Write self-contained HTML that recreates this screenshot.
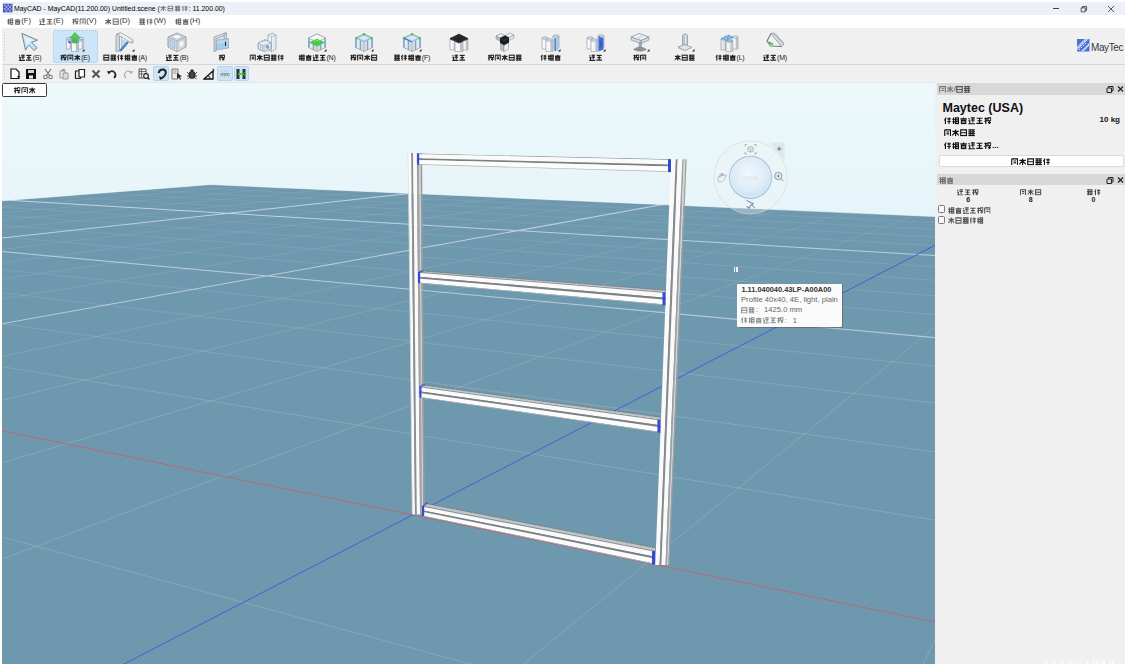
<!DOCTYPE html>
<html><head><meta charset="utf-8"><style>
*{box-sizing:border-box}
body{margin:0;width:1134px;height:664px;overflow:hidden;position:relative;background:#ffffff;font-family:"Liberation Sans",sans-serif;color:#000}
.a{position:absolute}
.cj{display:inline-block;vertical-align:middle}
.t{position:absolute;white-space:nowrap;line-height:1}
.t span{vertical-align:middle}
</style></head><body>
<svg width="0" height="0" style="position:absolute"><defs><symbol id="g0" viewBox="0 0 10 10"><path d="M1 1h8v8h-8zM1 5h8" fill="none" stroke="currentColor"/></symbol><symbol id="g1" viewBox="0 0 10 10"><path d="M2.2 0.5v9M0.5 3h3.5M0.5 6.5h3.5M5 1h4v8h-4zM5 3.7h4M5 6.3h4" fill="none" stroke="currentColor"/></symbol><symbol id="g2" viewBox="0 0 10 10"><path d="M1 1.5h8M2 5h6M0.5 8.7h9M5 1.5v7" fill="none" stroke="currentColor"/></symbol><symbol id="g3" viewBox="0 0 10 10"><path d="M0.5 3h9M5 0.5v9M5 3.5l-4.5 5M5 3.5l4.5 5" fill="none" stroke="currentColor"/></symbol><symbol id="g4" viewBox="0 0 10 10"><path d="M3 0.5l-2.5 4M2 3v6.5M4.5 2.5h5M4.5 6h5M7 0.5v9" fill="none" stroke="currentColor"/></symbol><symbol id="g5" viewBox="0 0 10 10"><path d="M0.8 1.5l1.5 1.5M0.5 5h2v3l-1 1.3h9M4 1h5.5M4 4h5.5M6.7 1v6.5" fill="none" stroke="currentColor"/></symbol><symbol id="g6" viewBox="0 0 10 10"><path d="M1 1v8.5M1 1h8v8.5M3.2 0.2l1.3 1.3M3.5 4h3.5M3.5 6.5h3.5" fill="none" stroke="currentColor"/></symbol><symbol id="g7" viewBox="0 0 10 10"><path d="M0.5 1h9M0.5 3.7h9M0.5 6.3h9M0.5 9h9M3 1v8M7 1v8" fill="none" stroke="currentColor"/></symbol><symbol id="g8" viewBox="0 0 10 10"><path d="M5 0.5v2M0.5 2.5h9M2 4.5h6v4.5h-6zM2 6.7h6" fill="none" stroke="currentColor"/></symbol><symbol id="g9" viewBox="0 0 10 10"><path d="M0.5 2h4M2.5 0.5v9M0.5 6l4-1.5M5.5 1h4v4h-4zM5.5 7.5h4M7.5 5v4.5" fill="none" stroke="currentColor"/></symbol></defs></svg>
<div class="a" style="left:2px;top:1.5px;width:1123px;height:13px;background:#eef0f7"></div><svg class="a" style="left:3px;top:3px" width="9.5" height="10" viewBox="0 0 11 10"><rect width="11" height="10" fill="#3a52c8"/><path d="M1 1h2v2h-2zM5 1h2v2h-2zM3 3h2v2h-2zM7 3h2v2h-2zM1 5h2v2h-2zM5 5h2v2h-2zM3 7h2v2h-2zM7 7h2v2h-2zM9 1h1v2h-1zM9 5h1v2h-1z" fill="#a8b4e8"/></svg><div class="t" style="left:14px;top:9.0px;transform:translate(0,-50%);font-size:6.9px;color:#000">MayCAD - MayCAD(11.200.00) Untitled.scene (<svg class="cj" width="28.00" height="6" viewBox="0 0 28.00 6" style="margin-right:0.80px;color:#000;opacity:0.55;overflow:visible;stroke-width:1.6"><use href="#g3" x="0.00" y="0" width="6.40" height="6"/><use href="#g0" x="7.20" y="0" width="6.40" height="6"/><use href="#g7" x="14.40" y="0" width="6.40" height="6"/><use href="#g4" x="21.60" y="0" width="6.40" height="6"/></svg>: 11.200.00)</div><div class="a" style="left:1053px;top:8px;width:6px;height:0.8px;background:#444"></div><svg class="a" style="left:1080px;top:4.5px" width="8" height="8" viewBox="0 0 8 8"><path d="M1.2 2.8h4v4h-4zM2.6 2.8v-1.4h4v4h-1.4" fill="none" stroke="#444" stroke-width="0.9"/></svg><svg class="a" style="left:1107px;top:4.5px" width="8" height="8" viewBox="0 0 8 8"><path d="M1 1L7 7M7 1L1 7" stroke="#444" stroke-width="0.9"/></svg>
<div class="a" style="left:2px;top:14.5px;width:1123px;height:13.5px;background:#ffffff"></div><div class="t" style="left:6.5px;top:21.2px;transform:translate(0,-50%);font-size:7.6px;color:#333"><svg class="cj" width="13.90" height="7.2" viewBox="0 0 13.90 7.2" style="margin-right:0.90px;color:#000;opacity:0.6;overflow:visible;stroke-width:1.6"><use href="#g1" x="0.00" y="0" width="6.50" height="7.2"/><use href="#g8" x="7.40" y="0" width="6.50" height="7.2"/></svg><span>(F)</span></div><div class="t" style="left:38.5px;top:21.2px;transform:translate(0,-50%);font-size:7.6px;color:#333"><svg class="cj" width="13.90" height="7.2" viewBox="0 0 13.90 7.2" style="margin-right:0.90px;color:#000;opacity:0.6;overflow:visible;stroke-width:1.6"><use href="#g5" x="0.00" y="0" width="6.50" height="7.2"/><use href="#g2" x="7.40" y="0" width="6.50" height="7.2"/></svg><span>(E)</span></div><div class="t" style="left:71.5px;top:21.2px;transform:translate(0,-50%);font-size:7.6px;color:#333"><svg class="cj" width="13.90" height="7.2" viewBox="0 0 13.90 7.2" style="margin-right:0.90px;color:#000;opacity:0.6;overflow:visible;stroke-width:1.6"><use href="#g9" x="0.00" y="0" width="6.50" height="7.2"/><use href="#g6" x="7.40" y="0" width="6.50" height="7.2"/></svg><span>(V)</span></div><div class="t" style="left:104.8px;top:21.2px;transform:translate(0,-50%);font-size:7.6px;color:#333"><svg class="cj" width="13.90" height="7.2" viewBox="0 0 13.90 7.2" style="margin-right:0.90px;color:#000;opacity:0.6;overflow:visible;stroke-width:1.6"><use href="#g3" x="0.00" y="0" width="6.50" height="7.2"/><use href="#g0" x="7.40" y="0" width="6.50" height="7.2"/></svg><span>(D)</span></div><div class="t" style="left:139px;top:21.2px;transform:translate(0,-50%);font-size:7.6px;color:#333"><svg class="cj" width="13.90" height="7.2" viewBox="0 0 13.90 7.2" style="margin-right:0.90px;color:#000;opacity:0.6;overflow:visible;stroke-width:1.6"><use href="#g7" x="0.00" y="0" width="6.50" height="7.2"/><use href="#g4" x="7.40" y="0" width="6.50" height="7.2"/></svg><span>(W)</span></div><div class="t" style="left:175px;top:21.2px;transform:translate(0,-50%);font-size:7.6px;color:#333"><svg class="cj" width="13.90" height="7.2" viewBox="0 0 13.90 7.2" style="margin-right:0.90px;color:#000;opacity:0.6;overflow:visible;stroke-width:1.6"><use href="#g1" x="0.00" y="0" width="6.50" height="7.2"/><use href="#g8" x="7.40" y="0" width="6.50" height="7.2"/></svg><span>(H)</span></div>
<div class="a" style="left:2px;top:28px;width:1123px;height:36px;background:#f0f0f0"></div><div class="a" style="left:2px;top:64px;width:1123px;height:1px;background:#d6d6d6"></div><div class="a" style="left:4px;top:32px;width:1px;height:29px;background:repeating-linear-gradient(180deg,#c4c4c4 0 1px,transparent 1px 3px)"></div><div class="a" style="left:53px;top:30px;width:45px;height:33px;background:#cde5f8;border:1px dotted #a9cbe8;border-radius:2px"></div><svg class="a" style="left:20px;top:32px;overflow:visible" width="20" height="20" viewBox="0 0 20 20"><path d="M1.8 1.3L17.6 8.2L11.6 10.3L17.2 15.8L14 18.6L8.6 12.9L5.5 18.2Z" fill="#c4def2" stroke="#6e7f8c" stroke-width="0.9" stroke-linejoin="round"/><path d="M3.5 3.5L14.5 8.3L10 9.8L7.5 14.5Z" fill="#e2f0fa"/></svg><div class="t" style="left:30px;top:57.4px;transform:translate(-50%,-50%);font-size:7px;color:#222;letter-spacing:-0.2px"><svg class="cj" width="13.40" height="7" viewBox="0 0 13.40 7" style="margin-right:0.60px;color:#111;opacity:0.9;overflow:visible;stroke-width:1.9"><use href="#g5" x="0.00" y="0" width="6.40" height="7"/><use href="#g2" x="7.00" y="0" width="6.40" height="7"/></svg><span>(S)</span></div><svg class="a" style="left:65px;top:32px;overflow:visible" width="20" height="20" viewBox="0 0 20 20"><path d="M1.5 6.5h5v10.5h-5z" fill="#f6f7f8" stroke="#7d8791" stroke-width="0.5"/><path d="M4.6 6.5h1.9v10.5h-1.9z" fill="#b9c1c8"/><ellipse cx="4.0" cy="6.5" rx="2.5" ry="1.2" fill="#cfe0ee" stroke="#7d8791" stroke-width="0.5"/><path d="M13.5 6.5h5v10.5h-5z" fill="#f6f7f8" stroke="#7d8791" stroke-width="0.5"/><path d="M16.6 6.5h1.9v10.5h-1.9z" fill="#b9c1c8"/><ellipse cx="16.0" cy="6.5" rx="2.5" ry="1.2" fill="#cfe0ee" stroke="#7d8791" stroke-width="0.5"/><path d="M6.5 9h7v10.5h-7z" fill="#f6f7f8" stroke="#7d8791" stroke-width="0.5"/><path d="M10.84 9h2.66v10.5h-2.66z" fill="#b9c1c8"/><ellipse cx="10.0" cy="9" rx="3.5" ry="1.2" fill="#8fb4d8" stroke="#7d8791" stroke-width="0.5"/><path d="M2 8.5L7 6L13 6L18 8.5L13 11L7 11Z" fill="#8fb0d4" opacity="0.75"/><path d="M3 9.5l3 1.5" stroke="#3d6fd0" stroke-width="1.6"/><path d="M10 0.5L15.2 6H12.3V11H7.7V6H4.8Z" fill="#52cc52" stroke="#2f9a3a" stroke-width="0.5"/><path d="M9.2 6.5v4M10.8 6.5v4" stroke="#2f9a3a" stroke-width="0.5"/><path d="M17 19.5l2.5-2.5v2.5z" fill="#1a1a1a"/></svg><div class="t" style="left:75px;top:57.4px;transform:translate(-50%,-50%);font-size:7px;color:#222;letter-spacing:-0.2px"><svg class="cj" width="20.40" height="7" viewBox="0 0 20.40 7" style="margin-right:0.60px;color:#111;opacity:0.9;overflow:visible;stroke-width:1.9"><use href="#g9" x="0.00" y="0" width="6.40" height="7"/><use href="#g6" x="7.00" y="0" width="6.40" height="7"/><use href="#g3" x="14.00" y="0" width="6.40" height="7"/></svg><span>(E)</span></div><svg class="a" style="left:115px;top:32px;overflow:visible" width="20" height="20" viewBox="0 0 20 20"><path d="M1 2.5L4.5 1L4.5 19L1 19.5Z" fill="#d0d6dc" stroke="#7d8791" stroke-width="0.6"/><path d="M4.5 1L6.5 1.5V18.5L4.5 19Z" fill="#eef1f3" stroke="#7d8791" stroke-width="0.5"/><path d="M2 2L6 0.8L18 8L17.5 11L14 9.5L5 4Z" fill="#f0f2f4" stroke="#7d8791" stroke-width="0.6"/><path d="M14 9.5L17.5 11L17.8 8" fill="#dde2e6" stroke="#7d8791" stroke-width="0.5"/><path d="M6.5 7L13.5 10.5L7 19Z" fill="#bcd6ec"/><path d="M5 19L13 10" stroke="#4b78d0" stroke-width="2.2"/><path d="M17 19.5l2.5-2.5v2.5z" fill="#1a1a1a"/></svg><div class="t" style="left:125px;top:57.4px;transform:translate(-50%,-50%);font-size:7px;color:#222;letter-spacing:-0.2px"><svg class="cj" width="34.40" height="7" viewBox="0 0 34.40 7" style="margin-right:0.60px;color:#111;opacity:0.9;overflow:visible;stroke-width:1.9"><use href="#g0" x="0.00" y="0" width="6.40" height="7"/><use href="#g7" x="7.00" y="0" width="6.40" height="7"/><use href="#g4" x="14.00" y="0" width="6.40" height="7"/><use href="#g1" x="21.00" y="0" width="6.40" height="7"/><use href="#g8" x="28.00" y="0" width="6.40" height="7"/></svg><span>(A)</span></div><svg class="a" style="left:167px;top:32px;overflow:visible" width="20" height="20" viewBox="0 0 20 20"><path d="M1 5L10 1L19 5V15L10 19.5L1 15Z" fill="#dfe5ea" stroke="#7d8791" stroke-width="0.7"/><path d="M1 5L10 9L19 5M10 9V19.5" fill="none" stroke="#7d8791" stroke-width="0.6"/><path d="M3 7.5L8 9.8V16.5L3 14Z" fill="#c0d2e2" stroke="#8aa2b8" stroke-width="0.5"/><path d="M12 9.8L17 7.5V14L12 16.5Z" fill="#f4f6f8" stroke="#8aa2b8" stroke-width="0.5"/><path d="M4 4.8L10 2.3L16 4.8L10 7.3Z" fill="#f5f7f9" stroke="#8aa2b8" stroke-width="0.5"/><path d="M1.5 5.5v9.5M18.5 5.5v9.5" stroke="#a9b4bd" stroke-width="1.2"/></svg><div class="t" style="left:177px;top:57.4px;transform:translate(-50%,-50%);font-size:7px;color:#222;letter-spacing:-0.2px"><svg class="cj" width="13.40" height="7" viewBox="0 0 13.40 7" style="margin-right:0.60px;color:#111;opacity:0.9;overflow:visible;stroke-width:1.9"><use href="#g5" x="0.00" y="0" width="6.40" height="7"/><use href="#g2" x="7.00" y="0" width="6.40" height="7"/></svg><span>(B)</span></div><svg class="a" style="left:212px;top:32px;overflow:visible" width="20" height="20" viewBox="0 0 20 20"><path d="M2 5L14 0.5V3L4 7V19L2 19.5Z" fill="#d3d9de" stroke="#7d8791" stroke-width="0.6"/><path d="M12 2L14.5 1V13L12 14Z" fill="#c8d0d6" stroke="#7d8791" stroke-width="0.5"/><path d="M4.5 8L16.5 6.5V16L4.5 18Z" fill="#a6cdeb" stroke="#7f9fc0" stroke-width="0.6"/><path d="M5 9L16 8V10L5 12Z" fill="#c6e0f4" opacity="0.8"/><path d="M13.5 9.5v4.5" stroke="#222" stroke-width="1"/></svg><div class="t" style="left:222px;top:57.4px;transform:translate(-50%,-50%);font-size:7px;color:#222;letter-spacing:-0.2px"><svg class="cj" width="6.40" height="7" viewBox="0 0 6.40 7" style="margin-right:0.60px;color:#111;opacity:0.9;overflow:visible;stroke-width:1.9"><use href="#g9" x="0.00" y="0" width="6.40" height="7"/></svg></div><svg class="a" style="left:257px;top:32px;overflow:visible" width="20" height="20" viewBox="0 0 20 20"><path d="M11 3L15.5 1L19 3V17L14.5 19.5L11 17.5Z" fill="#f3f5f7" stroke="#7d8791" stroke-width="0.6"/><path d="M11 3L14.5 5L19 3M14.5 5V19.5" fill="none" stroke="#7d8791" stroke-width="0.5"/><path d="M15.5 5.5l2.5-1.3v13l-2.5 1.3z" fill="#dfeaf3"/><ellipse cx="15" cy="2.6" rx="2" ry="0.9" fill="#cfe0ee"/><path d="M1 11L8 7.5L14 10.5V17L7 19.5L1 17Z" fill="#e6edf2" stroke="#7d8791" stroke-width="0.6"/><path d="M1 11L7 14L14 10.5M7 14V19.5" fill="none" stroke="#7d8791" stroke-width="0.5"/><path d="M1.5 12v5M3.5 13v5.5M5.5 14v5" stroke="#9fb8cc" stroke-width="0.9"/><ellipse cx="10.5" cy="15" rx="1.8" ry="2" fill="#7aa6d4"/><path d="M4 9.5L10 8.3" stroke="#9fc0de" stroke-width="1.2"/></svg><div class="t" style="left:267px;top:57.4px;transform:translate(-50%,-50%);font-size:7px;color:#222;letter-spacing:-0.2px"><svg class="cj" width="34.40" height="7" viewBox="0 0 34.40 7" style="margin-right:0.60px;color:#111;opacity:0.9;overflow:visible;stroke-width:1.9"><use href="#g6" x="0.00" y="0" width="6.40" height="7"/><use href="#g3" x="7.00" y="0" width="6.40" height="7"/><use href="#g0" x="14.00" y="0" width="6.40" height="7"/><use href="#g7" x="21.00" y="0" width="6.40" height="7"/><use href="#g4" x="28.00" y="0" width="6.40" height="7"/></svg></div><svg class="a" style="left:307px;top:32px;overflow:visible" width="20" height="20" viewBox="0 0 20 20"><path d="M1.5 6L10 2L18.5 6V15.5L10 19.5L1.5 15.5Z" fill="#e8ecef" stroke="#7d8791" stroke-width="0.6"/><path d="M2 6.5v9M6.5 8.5v9.5M13.5 8.5v9.5M18 6.5v9" stroke="#82a8c8" stroke-width="1.6"/><path d="M10 9.5V19.5" stroke="#9aa4ac" stroke-width="0.8"/><path d="M8.5 11h3v7h-3z" fill="#c4cbd1"/><path d="M1.5 6L10 2L18.5 6L10 10Z" fill="#f4f6f8" stroke="#7d8791" stroke-width="0.5"/><path d="M2 10.5L10 14.5L18 10.5L10 6.8Z" fill="#46cc46"/><path d="M7 9.5l3-1.2l3 1.5" stroke="#8fe08f" stroke-width="0.8" fill="none"/><path d="M17 19.5l2.5-2.5v2.5z" fill="#1a1a1a"/></svg><div class="t" style="left:317px;top:57.4px;transform:translate(-50%,-50%);font-size:7px;color:#222;letter-spacing:-0.2px"><svg class="cj" width="27.40" height="7" viewBox="0 0 27.40 7" style="margin-right:0.60px;color:#111;opacity:0.9;overflow:visible;stroke-width:1.9"><use href="#g1" x="0.00" y="0" width="6.40" height="7"/><use href="#g8" x="7.00" y="0" width="6.40" height="7"/><use href="#g5" x="14.00" y="0" width="6.40" height="7"/><use href="#g2" x="21.00" y="0" width="6.40" height="7"/></svg><span>(N)</span></div><svg class="a" style="left:354px;top:32px;overflow:visible" width="20" height="20" viewBox="0 0 20 20"><path d="M1.5 6L10 2L18.5 6V15.5L10 19.5L1.5 15.5Z" fill="#e8ecef" stroke="#7d8791" stroke-width="0.6"/><path d="M2 6.5v9M6.5 8.5v9.5M13.5 8.5v9.5M18 6.5v9" stroke="#82a8c8" stroke-width="1.6"/><path d="M10 9.5V19.5" stroke="#9aa4ac" stroke-width="0.8"/><path d="M8.5 11h3v7h-3z" fill="#c4cbd1"/><path d="M1.5 6L10 2L18.5 6L10 10Z" fill="#a9cdea" stroke="#7d9ab8" stroke-width="0.5"/><path d="M5 6L10 3.8L15 6L10 8.2Z" fill="#dceaf6"/><circle cx="2.5" cy="6" r="1.3" fill="#46cc46"/><circle cx="17.5" cy="6" r="1.3" fill="#46cc46"/><circle cx="10" cy="2.3" r="1.3" fill="#46cc46"/><path d="M17 19.5l2.5-2.5v2.5z" fill="#1a1a1a"/></svg><div class="t" style="left:364px;top:57.4px;transform:translate(-50%,-50%);font-size:7px;color:#222;letter-spacing:-0.2px"><svg class="cj" width="27.40" height="7" viewBox="0 0 27.40 7" style="margin-right:0.60px;color:#111;opacity:0.9;overflow:visible;stroke-width:1.9"><use href="#g9" x="0.00" y="0" width="6.40" height="7"/><use href="#g6" x="7.00" y="0" width="6.40" height="7"/><use href="#g3" x="14.00" y="0" width="6.40" height="7"/><use href="#g0" x="21.00" y="0" width="6.40" height="7"/></svg></div><svg class="a" style="left:402px;top:32px;overflow:visible" width="20" height="20" viewBox="0 0 20 20"><path d="M1.5 6L10 2L18.5 6V15.5L10 19.5L1.5 15.5Z" fill="#e8ecef" stroke="#7d8791" stroke-width="0.6"/><path d="M2 6.5v9M6.5 8.5v9.5M13.5 8.5v9.5M18 6.5v9" stroke="#82a8c8" stroke-width="1.6"/><path d="M10 9.5V19.5" stroke="#9aa4ac" stroke-width="0.8"/><path d="M8.5 11h3v7h-3z" fill="#c4cbd1"/><path d="M1.5 6L10 2L18.5 6L10 10Z" fill="#b5d4ee" stroke="#7d9ab8" stroke-width="0.5"/><path d="M5 6L10 3.8L15 6L10 8.2Z" fill="#dceaf6"/><circle cx="2.5" cy="6" r="1.3" fill="#46cc46"/><circle cx="17.5" cy="6" r="1.3" fill="#46cc46"/><circle cx="10" cy="2.3" r="1.3" fill="#46cc46"/><path d="M1.5 6L10 10" stroke="#3d6fd0" stroke-width="1.2"/><path d="M17 19.5l2.5-2.5v2.5z" fill="#1a1a1a"/></svg><div class="t" style="left:412px;top:57.4px;transform:translate(-50%,-50%);font-size:7px;color:#222;letter-spacing:-0.2px"><svg class="cj" width="27.40" height="7" viewBox="0 0 27.40 7" style="margin-right:0.60px;color:#111;opacity:0.9;overflow:visible;stroke-width:1.9"><use href="#g7" x="0.00" y="0" width="6.40" height="7"/><use href="#g4" x="7.00" y="0" width="6.40" height="7"/><use href="#g1" x="14.00" y="0" width="6.40" height="7"/><use href="#g8" x="21.00" y="0" width="6.40" height="7"/></svg><span>(F)</span></div><svg class="a" style="left:449px;top:32px;overflow:visible" width="20" height="20" viewBox="0 0 20 20"><path d="M1 7h6v11h-6z" fill="#f6f7f8" stroke="#7d8791" stroke-width="0.5"/><path d="M4.72 7h2.2800000000000002v11h-2.2800000000000002z" fill="#b9c1c8"/><ellipse cx="4.0" cy="7" rx="3.0" ry="1.2" fill="#333" stroke="#7d8791" stroke-width="0.5"/><path d="M13 7h6v11h-6z" fill="#f6f7f8" stroke="#7d8791" stroke-width="0.5"/><path d="M16.72 7h2.2800000000000002v11h-2.2800000000000002z" fill="#b9c1c8"/><ellipse cx="16.0" cy="7" rx="3.0" ry="1.2" fill="#333" stroke="#7d8791" stroke-width="0.5"/><path d="M6 9h8v10.5h-8z" fill="#f6f7f8" stroke="#7d8791" stroke-width="0.5"/><path d="M10.96 9h3.04v10.5h-3.04z" fill="#b9c1c8"/><ellipse cx="10.0" cy="9" rx="4.0" ry="1.2" fill="#333" stroke="#7d8791" stroke-width="0.5"/><path d="M1 6.5L10 2L19 6.5L10 11Z" fill="#262626" stroke="#111" stroke-width="0.5"/><path d="M1 6.5L10 11L19 6.5" fill="none" stroke="#555" stroke-width="0.6"/></svg><div class="t" style="left:459px;top:57.4px;transform:translate(-50%,-50%);font-size:7px;color:#222;letter-spacing:-0.2px"><svg class="cj" width="13.40" height="7" viewBox="0 0 13.40 7" style="margin-right:0.60px;color:#111;opacity:0.9;overflow:visible;stroke-width:1.9"><use href="#g5" x="0.00" y="0" width="6.40" height="7"/><use href="#g2" x="7.00" y="0" width="6.40" height="7"/></svg></div><svg class="a" style="left:495px;top:32px;overflow:visible" width="20" height="20" viewBox="0 0 20 20"><path d="M1 4L6 1.5L10 3.5L5 6Z" fill="#eef1f3" stroke="#7d8791" stroke-width="0.6"/><path d="M1 4L5 6V9L1 7Z" fill="#a9c6dc" stroke="#7d8791" stroke-width="0.5"/><path d="M10 3.5L15 1L19 3L14 5.5Z" fill="#f4f6f8" stroke="#7d8791" stroke-width="0.6"/><path d="M14 5.5L19 3V6L14 8.5Z" fill="#e6ebef" stroke="#7d8791" stroke-width="0.5"/><path d="M5 6L10 3.5L14 5.5V11L9 13.5L5 11Z" fill="#1e1e1e"/><path d="M6 7l3 1.5l4-2" stroke="#555" stroke-width="0.5" fill="none"/><path d="M5.5 11.5L9 13.5V19.5L5.5 17.5Z" fill="#a9c6dc" stroke="#7d8791" stroke-width="0.5"/><path d="M9 13.5L13.5 11V17L9 19.5Z" fill="#eef1f3" stroke="#7d8791" stroke-width="0.5"/></svg><div class="t" style="left:505px;top:57.4px;transform:translate(-50%,-50%);font-size:7px;color:#222;letter-spacing:-0.2px"><svg class="cj" width="34.40" height="7" viewBox="0 0 34.40 7" style="margin-right:0.60px;color:#111;opacity:0.9;overflow:visible;stroke-width:1.9"><use href="#g9" x="0.00" y="0" width="6.40" height="7"/><use href="#g6" x="7.00" y="0" width="6.40" height="7"/><use href="#g3" x="14.00" y="0" width="6.40" height="7"/><use href="#g0" x="21.00" y="0" width="6.40" height="7"/><use href="#g7" x="28.00" y="0" width="6.40" height="7"/></svg></div><svg class="a" style="left:541px;top:32px;overflow:visible" width="20" height="20" viewBox="0 0 20 20"><path d="M1 6h6v11h-6z" fill="#f6f7f8" stroke="#7d8791" stroke-width="0.5"/><path d="M4.72 6h2.2800000000000002v11h-2.2800000000000002z" fill="#b9c1c8"/><ellipse cx="4.0" cy="6" rx="3.0" ry="1.2" fill="#cfe0ee" stroke="#7d8791" stroke-width="0.5"/><path d="M12 4h6v12h-6z" fill="#f6f7f8" stroke="#7d8791" stroke-width="0.5"/><path d="M15.719999999999999 4h2.2800000000000002v12h-2.2800000000000002z" fill="#b9c1c8"/><ellipse cx="15.0" cy="4" rx="3.0" ry="1.2" fill="#cfe0ee" stroke="#7d8791" stroke-width="0.5"/><path d="M5 8h7v11.5h-7z" fill="#f6f7f8" stroke="#7d8791" stroke-width="0.5"/><path d="M9.34 8h2.66v11.5h-2.66z" fill="#b9c1c8"/><ellipse cx="8.5" cy="8" rx="3.5" ry="1.2" fill="#cfe0ee" stroke="#7d8791" stroke-width="0.5"/><path d="M13.5 5.5L17.5 7.5V18L13.5 19.5Z" fill="#a8cbe8"/><path d="M14.2 6v13" stroke="#4a7ad0" stroke-width="1.4"/><path d="M17 19.5l2.5-2.5v2.5z" fill="#1a1a1a"/></svg><div class="t" style="left:551px;top:57.4px;transform:translate(-50%,-50%);font-size:7px;color:#222;letter-spacing:-0.2px"><svg class="cj" width="20.40" height="7" viewBox="0 0 20.40 7" style="margin-right:0.60px;color:#111;opacity:0.9;overflow:visible;stroke-width:1.9"><use href="#g4" x="0.00" y="0" width="6.40" height="7"/><use href="#g1" x="7.00" y="0" width="6.40" height="7"/><use href="#g8" x="14.00" y="0" width="6.40" height="7"/></svg></div><svg class="a" style="left:586px;top:32px;overflow:visible" width="20" height="20" viewBox="0 0 20 20"><path d="M1 6h6v11h-6z" fill="#f6f7f8" stroke="#7d8791" stroke-width="0.5"/><path d="M4.72 6h2.2800000000000002v11h-2.2800000000000002z" fill="#b9c1c8"/><ellipse cx="4.0" cy="6" rx="3.0" ry="1.2" fill="#cfe0ee" stroke="#7d8791" stroke-width="0.5"/><path d="M12 4h6v12h-6z" fill="#f6f7f8" stroke="#7d8791" stroke-width="0.5"/><path d="M15.719999999999999 4h2.2800000000000002v12h-2.2800000000000002z" fill="#b9c1c8"/><ellipse cx="15.0" cy="4" rx="3.0" ry="1.2" fill="#cfe0ee" stroke="#7d8791" stroke-width="0.5"/><path d="M5 8h7v11.5h-7z" fill="#f6f7f8" stroke="#7d8791" stroke-width="0.5"/><path d="M9.34 8h2.66v11.5h-2.66z" fill="#b9c1c8"/><ellipse cx="8.5" cy="8" rx="3.5" ry="1.2" fill="#cfe0ee" stroke="#7d8791" stroke-width="0.5"/><path d="M12.5 4L17.5 6.5V17.5L12.5 19.5Z" fill="#4070d8"/><path d="M13.5 8l3 6M16 7l-2 9" stroke="#2a50b0" stroke-width="0.7"/><path d="M17 19.5l2.5-2.5v2.5z" fill="#1a1a1a"/></svg><div class="t" style="left:596px;top:57.4px;transform:translate(-50%,-50%);font-size:7px;color:#222;letter-spacing:-0.2px"><svg class="cj" width="13.40" height="7" viewBox="0 0 13.40 7" style="margin-right:0.60px;color:#111;opacity:0.9;overflow:visible;stroke-width:1.9"><use href="#g5" x="0.00" y="0" width="6.40" height="7"/><use href="#g2" x="7.00" y="0" width="6.40" height="7"/></svg></div><svg class="a" style="left:630px;top:32px;overflow:visible" width="20" height="20" viewBox="0 0 20 20"><path d="M1 5L9 1.5L19 5L11 8.5Z" fill="#f1f3f5" stroke="#7d8791" stroke-width="0.7"/><path d="M1 5V8L11 11.5V8.5ZM11 8.5V11.5L19 8V5Z" fill="#d2d9df" stroke="#7d8791" stroke-width="0.6"/><path d="M6 6L12 3.5L14 4.3L8 6.8Z" fill="#cfd8e0"/><path d="M9 10.5h2.5v5h-2.5z" fill="#a3acb3" stroke="#7d8791" stroke-width="0.4"/><path d="M3.5 17.5q6.5-5 13 0q-6.5 3.5-13 0z" fill="#8a939b" stroke="#6d767e" stroke-width="0.5"/><path d="M17 19.5l2.5-2.5v2.5z" fill="#1a1a1a"/></svg><div class="t" style="left:640px;top:57.4px;transform:translate(-50%,-50%);font-size:7px;color:#222;letter-spacing:-0.2px"><svg class="cj" width="13.40" height="7" viewBox="0 0 13.40 7" style="margin-right:0.60px;color:#111;opacity:0.9;overflow:visible;stroke-width:1.9"><use href="#g9" x="0.00" y="0" width="6.40" height="7"/><use href="#g6" x="7.00" y="0" width="6.40" height="7"/></svg></div><svg class="a" style="left:675px;top:32px;overflow:visible" width="20" height="20" viewBox="0 0 20 20"><path d="M7.5 3q2.5-2.5 5 0v10h-5z" fill="#cdd3d8" stroke="#7d8791" stroke-width="0.6"/><path d="M7.5 5h5M7.5 7h5M7.5 9h5M7.5 11h5" stroke="#9aa2a8" stroke-width="0.6"/><path d="M10.8 3v10" stroke="#eef1f3" stroke-width="1"/><path d="M3 15L10 12.5L17 15.5L10 18.5Z" fill="#e3e7ea" stroke="#7d8791" stroke-width="0.7"/><path d="M3 15v1.5L10 19.5v-1z" fill="#b9c1c8"/><path d="M17 19.5l2.5-2.5v2.5z" fill="#1a1a1a"/></svg><div class="t" style="left:685px;top:57.4px;transform:translate(-50%,-50%);font-size:7px;color:#222;letter-spacing:-0.2px"><svg class="cj" width="20.40" height="7" viewBox="0 0 20.40 7" style="margin-right:0.60px;color:#111;opacity:0.9;overflow:visible;stroke-width:1.9"><use href="#g3" x="0.00" y="0" width="6.40" height="7"/><use href="#g0" x="7.00" y="0" width="6.40" height="7"/><use href="#g7" x="14.00" y="0" width="6.40" height="7"/></svg></div><svg class="a" style="left:720px;top:32px;overflow:visible" width="20" height="20" viewBox="0 0 20 20"><path d="M1 7h6v11h-6z" fill="#e2e8ee" stroke="#7d8791" stroke-width="0.5"/><path d="M4.72 7h2.2800000000000002v11h-2.2800000000000002z" fill="#b0bcc6"/><ellipse cx="4.0" cy="7" rx="3.0" ry="1.2" fill="#9fc4e6" stroke="#7d8791" stroke-width="0.5"/><path d="M12 5h6v12h-6z" fill="#f6f7f8" stroke="#7d8791" stroke-width="0.5"/><path d="M15.719999999999999 5h2.2800000000000002v12h-2.2800000000000002z" fill="#b9c1c8"/><ellipse cx="15.0" cy="5" rx="3.0" ry="1.2" fill="#dfe9f1" stroke="#7d8791" stroke-width="0.5"/><path d="M6 9h7v10.5h-7z" fill="#eef2f5" stroke="#7d8791" stroke-width="0.5"/><path d="M10.34 9h2.66v10.5h-2.66z" fill="#c0cad2"/><ellipse cx="9.5" cy="9" rx="3.5" ry="1.2" fill="#9fc4e6" stroke="#7d8791" stroke-width="0.5"/><path d="M1 6L8 2.5L14 5L7 8.5Z" fill="#6f9fd6"/><path d="M2.5 6l2-1M6 4.5l2-1M5 7l2-1M8.5 5.5l2-1" stroke="#c8dff3" stroke-width="1"/></svg><div class="t" style="left:730px;top:57.4px;transform:translate(-50%,-50%);font-size:7px;color:#222;letter-spacing:-0.2px"><svg class="cj" width="20.40" height="7" viewBox="0 0 20.40 7" style="margin-right:0.60px;color:#111;opacity:0.9;overflow:visible;stroke-width:1.9"><use href="#g4" x="0.00" y="0" width="6.40" height="7"/><use href="#g1" x="7.00" y="0" width="6.40" height="7"/><use href="#g8" x="14.00" y="0" width="6.40" height="7"/></svg><span>(L)</span></div><svg class="a" style="left:765px;top:32px;overflow:visible" width="20" height="20" viewBox="0 0 20 20"><path d="M6 1.5L9 1L19 12L16.5 14.5Z" fill="#d8dde1" stroke="#7d8791" stroke-width="0.7"/><path d="M9 1L19 12" stroke="#a9b2b9" stroke-width="1.5"/><path d="M6 1.5L2 9L5.5 14L16.5 14.5" fill="none" stroke="#6f7a84" stroke-width="1.1"/><path d="M3.5 10L8 12.5" stroke="#3cc43c" stroke-width="1.8"/></svg><div class="t" style="left:775px;top:57.4px;transform:translate(-50%,-50%);font-size:7px;color:#222;letter-spacing:-0.2px"><svg class="cj" width="13.40" height="7" viewBox="0 0 13.40 7" style="margin-right:0.60px;color:#111;opacity:0.9;overflow:visible;stroke-width:1.9"><use href="#g5" x="0.00" y="0" width="6.40" height="7"/><use href="#g2" x="7.00" y="0" width="6.40" height="7"/></svg><span>(M)</span></div><svg class="a" style="left:1077px;top:39px" width="12.5" height="12.5" viewBox="0 0 12.5 12.5"><rect width="12.5" height="12.5" fill="#4a72d4"/><path d="M0 7.5L7.5 0H11.5L0 11.5ZM3.5 12.5L12.5 3.5V6.5L6.5 12.5Z" fill="#aac2ec"/><path d="M1 8h1v1h-1zM3 6h1v1h-1zM5 4h1v1h-1zM7 2h1v1h-1zM2 10h1v1h-1zM4 8h1v1h-1zM6 6h1v1h-1zM8 4h1v1h-1zM9 1h1v1h-1zM5 11h1v1h-1zM7 9h1v1h-1zM9 7h1v1h-1zM11 5h1v1h-1z" fill="#e6eefa"/></svg><div class="t" style="left:1091px;top:47.6px;transform:translate(0,-50%);font-size:10px;color:#333a44;letter-spacing:-0.4px">MayTec</div>
<div class="a" style="left:2px;top:65px;width:1123px;height:17px;background:#f0f0f0"></div><div class="a" style="left:4px;top:67px;width:1px;height:13px;background:repeating-linear-gradient(180deg,#c4c4c4 0 1px,transparent 1px 3px)"></div><div class="a" style="left:153px;top:66.3px;width:15.8px;height:14.3px;background:#cce4f7;border:1px solid #b4d6f2;border-radius:2px"></div><div class="a" style="left:217.2px;top:66.3px;width:15.4px;height:14.3px;background:#cce4f7;border:1px solid #b4d6f2;border-radius:2px"></div><div class="a" style="left:233.8px;top:66.3px;width:14.9px;height:14.3px;background:#cce4f7;border:1px solid #b4d6f2;border-radius:2px"></div><svg class="a" style="left:9px;top:67.5px" width="12" height="12" viewBox="0 0 12 12"><path d="M2 1h5l3 3v6.5h-8z" fill="#fff" stroke="#111" stroke-width="1.2"/><path d="M8 8h3l-1.5 2z" fill="#111"/></svg><svg class="a" style="left:25.4px;top:67.5px" width="12" height="12" viewBox="0 0 12 12"><path d="M1 1h10v10h-10z" fill="#111"/><path d="M3 2h6v3h-6z" fill="#cfd8e0"/><path d="M4 7.5h4v3h-4z" fill="#eee"/></svg><svg class="a" style="left:41.5px;top:67.5px" width="12" height="12" viewBox="0 0 12 12"><path d="M3 1L8 8M9 1L4 8" stroke="#777" stroke-width="1.2"/><circle cx="3.5" cy="9" r="1.8" fill="none" stroke="#777" stroke-width="1.1"/><circle cx="8.5" cy="9" r="1.8" fill="none" stroke="#777" stroke-width="1.1"/></svg><svg class="a" style="left:57.5px;top:67.5px" width="12" height="12" viewBox="0 0 12 12"><path d="M2 3h5v7h-5z" fill="#eee" stroke="#999" stroke-width="1"/><path d="M5 5h5v6h-5z" fill="#ddd" stroke="#999" stroke-width="1"/><path d="M4 1h3v2h-3z" fill="#999"/></svg><svg class="a" style="left:73.6px;top:67.5px" width="12" height="12" viewBox="0 0 12 12"><path d="M1.5 3h5v7.5h-5z" fill="#eee" stroke="#222" stroke-width="1.2"/><path d="M5 1.5h5.5v7.5h-5.5z" fill="#fff" stroke="#222" stroke-width="1.2"/></svg><svg class="a" style="left:89.9px;top:67.5px" width="12" height="12" viewBox="0 0 12 12"><path d="M2.5 2.5L9.5 9.5M9.5 2.5L2.5 9.5" stroke="#555" stroke-width="2"/></svg><svg class="a" style="left:106px;top:67.5px" width="12" height="12" viewBox="0 0 12 12"><path d="M3 5q3-4 6 0q1.5 3-1 5" fill="none" stroke="#222" stroke-width="1.6"/><path d="M1 3l3.5 0.5l-2 3z" fill="#222"/></svg><svg class="a" style="left:122px;top:67.5px" width="12" height="12" viewBox="0 0 12 12"><path d="M9 5q-3-4-6 0q-1.5 3 1 5" fill="none" stroke="#aaa" stroke-width="1.2"/><path d="M11 3l-3.5 0.5l2 3z" fill="#aaa"/></svg><svg class="a" style="left:138px;top:67.5px" width="12" height="12" viewBox="0 0 12 12"><path d="M1 1h7v9h-7z" fill="none" stroke="#555" stroke-width="1"/><path d="M1 3.5h7M1 6h7M3.5 1v9" stroke="#555" stroke-width="0.8"/><circle cx="8" cy="8" r="2.3" fill="#f0f0f0" stroke="#222" stroke-width="1.2"/><path d="M9.5 9.5l2 2" stroke="#222" stroke-width="1.4"/></svg><svg class="a" style="left:155.7px;top:67.5px" width="12" height="12" viewBox="0 0 12 12"><path d="M2.5 5q1-4 5-3.5q3 1 2 4.5q-1 3-4.5 4.5" fill="none" stroke="#222" stroke-width="2"/><path d="M3 8l1 4l3-2z" fill="#222"/></svg><svg class="a" style="left:170.6px;top:67.5px" width="12" height="12" viewBox="0 0 12 12"><path d="M1 1h6v10h-6z" fill="#eee" stroke="#777" stroke-width="1"/><path d="M2.5 3h3M2.5 5h3" stroke="#777" stroke-width="0.8"/><path d="M6 5l5 3.5l-2.2 0.3l1.3 2.5l-1 0.5l-1.3-2.5l-1.8 1.5z" fill="#222"/></svg><svg class="a" style="left:186.2px;top:67.5px" width="12" height="12" viewBox="0 0 12 12"><ellipse cx="6" cy="7" rx="3.5" ry="4" fill="#333"/><circle cx="6" cy="3" r="1.8" fill="#333"/><path d="M1 4l2 2M11 4l-2 2M1 8h2M11 8h-2M1.5 11l2-1.5M10.5 11l-2-1.5" stroke="#333" stroke-width="0.8"/><path d="M6 4v7" stroke="#888" stroke-width="0.6"/></svg><svg class="a" style="left:202.7px;top:67.5px" width="12" height="12" viewBox="0 0 12 12"><path d="M1 11L10 3V11Z" fill="none" stroke="#111" stroke-width="1.3"/><path d="M5 8q2 0 2 3" fill="none" stroke="#111" stroke-width="0.9"/><path d="M9.5 1q1.5 0 1.5 1q0 1-1 1.3v1" fill="none" stroke="#111" stroke-width="0.8"/></svg><svg class="a" style="left:218.8px;top:67.5px" width="12" height="12" viewBox="0 0 12 12"><path d="M1 3h10M1 9h10" stroke="#bbb" stroke-width="0.8" stroke-dasharray="1 1"/><text x="6" y="8.2" font-size="5.5" text-anchor="middle" font-family="Liberation Sans" fill="#444">mm</text></svg><svg class="a" style="left:235.2px;top:67.5px" width="12" height="12" viewBox="0 0 12 12"><path d="M1.5 1h3v10h-3zM7.5 1h3v10h-3z" fill="#333"/><path d="M3 6h6" stroke="#30d030" stroke-width="1.8"/><path d="M9.5 4l1.5 2l-1.5 2" fill="none" stroke="#30d030" stroke-width="1"/></svg>
<svg style="position:absolute;left:0;top:0" width="935" height="664" viewBox="0 0 935 664"><defs><clipPath id="vp"><rect x="2" y="82" width="933" height="582"/></clipPath></defs><g clip-path="url(#vp)"><defs><linearGradient id="sky" x1="0" y1="82" x2="0" y2="230" gradientUnits="userSpaceOnUse"><stop offset="0" stop-color="#edf9fa"/><stop offset="1" stop-color="#e5f4fa"/></linearGradient></defs><rect x="0" y="82" width="935" height="582" fill="url(#sky)"/><rect x="2" y="81.5" width="933" height="1" fill="#d6d8d9"/><path d="M210.9 184.5 L-1446.7 314.1 L16116.2 26225.8 L1274.5 231.5Z" fill="#6e98ae"/><defs><linearGradient id="mg" x1="0" y1="185" x2="0" y2="420" gradientUnits="userSpaceOnUse"><stop offset="0" stop-color="#fff" stop-opacity="0.06"/><stop offset="1" stop-color="#fff" stop-opacity="0.15"/></linearGradient><linearGradient id="Mg" x1="0" y1="185" x2="0" y2="420" gradientUnits="userSpaceOnUse"><stop offset="0" stop-color="#fff" stop-opacity="0.58"/><stop offset="1" stop-color="#fff" stop-opacity="0.42"/></linearGradient></defs><path d="M2483.6 6112.8L1229.5 229.5M3450.4 4042.5L-1332.3 305.2M14.7 2470.3L1143.5 225.7M2036.0 1565.2L-1130.7 289.4M-590.4 1577.5L1062.7 222.1M1714.3 1001.8L-958.7 276.0M-1019.8 944.0L914.6 215.6M1491.6 611.8L-681.1 254.2M-1120.4 795.5L846.6 212.6M1440.0 521.4L-567.5 245.4M-1190.8 691.7L782.1 209.7M1404.1 458.5L-466.7 237.5M-1242.8 615.0L721.0 207.0M1377.6 412.1L-376.8 230.4M-1314.5 509.3L607.8 202.0M1341.3 348.5L-223.2 218.4M-1340.2 471.3L555.3 199.7M1328.2 325.6L-157.1 213.3M-1361.5 439.8L505.2 197.5M1317.5 306.8L-96.9 208.5M-1379.5 413.4L457.4 195.4M1308.4 290.9L-41.7 204.2M-1408.0 371.3L368.0 191.4M1294.0 265.6L55.6 196.6M-1419.5 354.2L326.2 189.6M1288.2 255.5L98.8 193.2M-1429.7 339.3L286.1 187.8M1283.1 246.5L138.9 190.1M-1438.7 326.0L247.7 186.1M1278.5 238.6L176.1 187.2" stroke="url(#mg)" stroke-width="1" fill="none"/><path d="M-1282.8 556.0L663.0 204.4M1357.3 376.6L-296.1 224.1M-1394.8 390.8L411.7 193.3M1300.7 277.3L8.9 200.3M-1446.7 314.1L210.9 184.5M1274.5 231.5L210.9 184.5" stroke="url(#Mg)" stroke-width="1.05" fill="none"/><path d="M1571.9 752.4L-810.4 264.4" stroke="#b86a6e" stroke-width="1" fill="none"/><path d="M-863.9 1174.0L986.5 218.7" stroke="#3a5ad8" stroke-width="0.9" fill="none"/><g><path d="M407.70 153.00L408.42 153.00L412.54 514.50L411.90 514.50Z" fill="#d8d8d8"/><path d="M408.42 153.00L411.16 153.00L415.00 514.50L412.54 514.50Z" fill="#fbfbfb"/><path d="M411.16 153.00L413.17 153.00L416.80 514.50L415.00 514.50Z" fill="#8f8f8f"/><path d="M413.17 153.00L416.77 153.00L420.03 514.50L416.80 514.50Z" fill="#fafafa"/><path d="M416.77 153.00L418.93 153.00L421.96 514.50L420.03 514.50Z" fill="#a4a4a4"/><path d="M418.93 153.00L420.52 153.00L423.38 514.50L421.96 514.50Z" fill="#cfcfcf"/><path d="M420.52 153.00L422.10 153.00L424.80 514.50L423.38 514.50Z" fill="#9c9c9c"/><path d="M671.00 159.20L675.71 159.20L659.56 565.00L655.30 565.00Z" fill="#fafafa"/><path d="M675.71 159.20L677.75 159.20L661.41 565.00L659.56 565.00Z" fill="#8a8a8a"/><path d="M677.75 159.20L682.30 159.20L665.52 565.00L661.41 565.00Z" fill="#fafafa"/><path d="M682.30 159.20L683.87 159.20L666.94 565.00L665.52 565.00Z" fill="#a0a0a0"/><path d="M683.87 159.20L685.44 159.20L668.36 565.00L666.94 565.00Z" fill="#d4d4d4"/><path d="M685.44 159.20L686.70 159.20L669.50 565.00L668.36 565.00Z" fill="#a0a0a0"/><path d="M417.00 153.60L417.00 154.27L671.00 159.97L671.00 159.20Z" fill="#8c8c8c"/><path d="M417.00 154.27L417.00 158.26L671.00 164.62L671.00 159.97Z" fill="#fafafa"/><path d="M417.00 158.26L417.00 159.93L671.00 166.55L671.00 164.62Z" fill="#7f7f7f"/><path d="M417.00 159.93L417.00 164.03L671.00 171.33L671.00 166.55Z" fill="#fcfcfc"/><path d="M417.00 164.03L417.00 164.70L671.00 172.10L671.00 171.33Z" fill="#b0b0b0"/><path d="M417 153.6L419.2 153.6L419.2 164.7L417 164.7Z" fill="#3848d6"/><path d="M668 159.2L671 159.2L671 172.1L668 172.1Z" fill="#3848d6"/><path d="M420 270.8L665.5 290.3L665.5 292.3L420 272Z" fill="#c4c4c4"/><path d="M420 270.8L665.5 290.3" stroke="#666" stroke-width="0.8" stroke-dasharray="1.5 1"/><path d="M418.00 272.00L418.00 272.67L665.50 293.08L665.50 292.30Z" fill="#8c8c8c"/><path d="M418.00 272.67L418.00 276.70L665.50 297.76L665.50 293.08Z" fill="#fafafa"/><path d="M418.00 276.70L418.00 278.38L665.50 299.71L665.50 297.76Z" fill="#7f7f7f"/><path d="M418.00 278.38L418.00 282.53L665.50 304.52L665.50 299.71Z" fill="#fcfcfc"/><path d="M418.00 282.53L418.00 283.20L665.50 305.30L665.50 304.52Z" fill="#b0b0b0"/><path d="M418 272L420.2 272L420.2 283.2L418 283.2Z" fill="#3848d6"/><path d="M418.6 272.4L423 270.8" stroke="#3848d6" stroke-width="1.1" stroke-linecap="round"/><path d="M662.5 292.3L665.5 292.3L665.5 305.3L662.5 305.3Z" fill="#3848d6"/><path d="M421.3 384.7L660.4 417.2L660.4 419.8L421.3 386.7Z" fill="#c4c4c4"/><path d="M421.3 384.7L660.4 417.2" stroke="#666" stroke-width="0.8" stroke-dasharray="1.5 1"/><path d="M419.30 386.70L419.30 387.35L660.40 420.57L660.40 419.80Z" fill="#8c8c8c"/><path d="M419.30 387.35L419.30 391.28L660.40 425.22L660.40 420.57Z" fill="#fafafa"/><path d="M419.30 391.28L419.30 392.91L660.40 427.15L660.40 425.22Z" fill="#7f7f7f"/><path d="M419.30 392.91L419.30 396.95L660.40 431.93L660.40 427.15Z" fill="#fcfcfc"/><path d="M419.30 396.95L419.30 397.60L660.40 432.70L660.40 431.93Z" fill="#b0b0b0"/><path d="M419.3 386.7L421.5 386.7L421.5 397.6L419.3 397.6Z" fill="#3848d6"/><path d="M419.90000000000003 387.09999999999997L424.3 384.7" stroke="#3848d6" stroke-width="1.1" stroke-linecap="round"/><path d="M657.4 419.8L660.4 419.8L660.4 432.7L657.4 432.7Z" fill="#3848d6"/><path d="M424 503.2L655 547.8L655 551L424 506Z" fill="#c4c4c4"/><path d="M424 503.2L655 547.8" stroke="#666" stroke-width="0.8" stroke-dasharray="1.5 1"/><path d="M422.00 506.00L422.00 506.60L655.00 551.81L655.00 551.00Z" fill="#8c8c8c"/><path d="M422.00 506.60L422.00 510.20L655.00 556.67L655.00 551.81Z" fill="#fafafa"/><path d="M422.00 510.20L422.00 511.70L655.00 558.70L655.00 556.67Z" fill="#7f7f7f"/><path d="M422.00 511.70L422.00 515.40L655.00 563.69L655.00 558.70Z" fill="#fcfcfc"/><path d="M422.00 515.40L422.00 516.00L655.00 564.50L655.00 563.69Z" fill="#b0b0b0"/><path d="M422 506L424.2 506L424.2 516L422 516Z" fill="#3848d6"/><path d="M422.6 506.4L427 503.2" stroke="#3848d6" stroke-width="1.1" stroke-linecap="round"/><path d="M652 551L655 551L655 564.5L652 564.5Z" fill="#3848d6"/></g></g></svg>
<div class="a" style="left:2px;top:83px;width:45px;height:13.5px;background:#fff;border:1.2px solid #3a3a3a;border-radius:1.5px"></div><div class="t" style="left:24.5px;top:89.7px;transform:translate(-50%,-50%);"><svg class="cj" width="22.00" height="7" viewBox="0 0 22.00 7" style="margin-right:0.80px;color:#000;opacity:0.85;overflow:visible;stroke-width:1.6"><use href="#g9" x="0.00" y="0" width="6.80" height="7"/><use href="#g6" x="7.60" y="0" width="6.80" height="7"/><use href="#g3" x="15.20" y="0" width="6.80" height="7"/></svg></div>
<svg class="a" style="left:700px;top:127px" width="100" height="100" viewBox="700 127 100 100"><defs><radialGradient id="ball" cx="0.48" cy="0.42" r="0.62"><stop offset="0" stop-color="#f2f8fc"/><stop offset="0.65" stop-color="#dcebf7"/><stop offset="1" stop-color="#c2dbef"/></radialGradient></defs><path d="M769 142.5L784.5 142.5L784.5 160Z" fill="#dfe6ea" opacity="0.9"/><circle cx="750.5" cy="177.4" r="36.6" fill="#f0f3f5" fill-opacity="0.32" stroke="#dcd3cd" stroke-width="0.6"/><path d="M724.7 151.6L735.0 161.9M776.3 151.6L766.0 161.9M724.7 203.20000000000002L735.0 192.9M776.3 203.20000000000002L766.0 192.9" stroke="#e6e0dc" stroke-width="0.6"/><circle cx="750.5" cy="177.4" r="21" fill="url(#ball)" stroke="#abc4d8" stroke-width="1.1"/><circle cx="750.5" cy="177.4" r="19.6" fill="none" stroke="#e6f1f9" stroke-width="0.8"/><text x="750.5" y="179.9" font-family="Liberation Sans" font-size="8" text-anchor="middle" fill="#d2dee8" opacity="0.7">orbit</text><path d="M745.0 146.5v-2h2M756.0 146.5v-2h-2M745.0 152v2h2M756.0 152v2h-2" fill="none" stroke="#8d99a2" stroke-width="0.7"/><circle cx="750.5" cy="149.3" r="2.8" fill="none" stroke="#8d99a2" stroke-width="0.7"/><path d="M750.5 149.3v2.8M750.5 149.3l-2.4-1.4M750.5 149.3l2.4-1.4" stroke="#8d99a2" stroke-width="0.6"/><path d="M777 148.8h4.4M779.2 146.6v4.4" stroke="#6e8fae" stroke-width="1.2"/><circle cx="778.3" cy="176" r="3.6" fill="none" stroke="#7d8c97" stroke-width="0.9"/><path d="M781 178.8l2.4 2.4M776.6 176h3.4M778.3 174.3v3.4" stroke="#7d8c97" stroke-width="0.9"/><path d="M718.5 181.5q-1.5-3 0.5-5.5l1 1.5v-3.5l1.3 2.5v-3.5l1.3 3v-3l1.2 3q1.5-2 2.5-1l-2 5q-2 3-5.8 1.5z" fill="none" stroke="#a3acb3" stroke-width="0.7"/><path d="M746.5 200.5l7 3.2l-2.2 0.8l3.6 3.6M751.3 204.5l-2.8 4.5M749 207.5l-2.5-0.8" fill="none" stroke="#5e7488" stroke-width="0.9"/></svg>
<div class="a" style="left:738.5px;top:285px;width:104.5px;height:42.8px;background:#555;opacity:0.55;border-radius:1px"></div><div class="a" style="left:737.4px;top:284px;width:104.6px;height:42.8px;background:#fbfbfb;border-radius:1px"></div><div class="t" style="left:741.4px;top:290.3px;transform:translate(0,-50%);font-size:7.4px;font-weight:bold;color:#333">1.11.040040.43LP-A00A00</div><div class="t" style="left:741px;top:300.3px;transform:translate(0,-50%);font-size:7.65px;color:#666">Profile 40x40, 4E, light, plain</div><div class="t" style="left:741px;top:310.3px;transform:translate(0,-50%);font-size:7.65px"><svg class="cj" width="13.80" height="6.5" viewBox="0 0 13.80 6.5" style="margin-right:0.60px;color:#000;opacity:0.45;overflow:visible;stroke-width:1.6"><use href="#g0" x="0.00" y="0" width="6.60" height="6.5"/><use href="#g7" x="7.20" y="0" width="6.60" height="6.5"/></svg><span style="color:#666;margin-left:0.5px">:</span><span style="color:#666;margin-left:6px">1425.0 mm</span></div><div class="t" style="left:741px;top:320.5px;transform:translate(0,-50%);font-size:7.65px"><svg class="cj" width="42.60" height="6.5" viewBox="0 0 42.60 6.5" style="margin-right:0.60px;color:#000;opacity:0.45;overflow:visible;stroke-width:1.6"><use href="#g4" x="0.00" y="0" width="6.60" height="6.5"/><use href="#g1" x="7.20" y="0" width="6.60" height="6.5"/><use href="#g8" x="14.40" y="0" width="6.60" height="6.5"/><use href="#g5" x="21.60" y="0" width="6.60" height="6.5"/><use href="#g2" x="28.80" y="0" width="6.60" height="6.5"/><use href="#g9" x="36.00" y="0" width="6.60" height="6.5"/></svg><span style="color:#666;margin-left:0.5px">:</span><span style="color:#666;margin-left:6px">1</span></div><div class="a" style="left:733.5px;top:267px;width:1.6px;height:5px;background:#f4f4f4"></div><div class="a" style="left:736px;top:267px;width:1.6px;height:5px;background:#f4f4f4"></div>
<div class="a" style="left:935px;top:82px;width:190px;height:582px;background:#f0f0f0"></div><div class="a" style="left:937px;top:83px;width:188px;height:12px;background:#d8d8d8"></div><div class="t" style="left:938.5px;top:89.3px;transform:translate(0,-50%);font-size:8px"><svg class="cj" width="14.60" height="7" viewBox="0 0 14.60 7" style="margin-right:0.60px;color:#000;opacity:0.45;overflow:visible;stroke-width:1.6"><use href="#g6" x="0.00" y="0" width="7.00" height="7"/><use href="#g3" x="7.60" y="0" width="7.00" height="7"/></svg><span style="color:#444">/</span><svg class="cj" width="14.60" height="7" viewBox="0 0 14.60 7" style="margin-right:0.60px;color:#000;opacity:0.6;overflow:visible;stroke-width:1.6"><use href="#g0" x="0.00" y="0" width="7.00" height="7"/><use href="#g7" x="7.60" y="0" width="7.00" height="7"/></svg></div><svg class="a" style="left:1105px;top:85px" width="20" height="9" viewBox="0 0 20 9"><path d="M2 3h4.5v4.5h-4.5zM3.5 3v-1.5h4.5v4.5h-1.5" fill="none" stroke="#222" stroke-width="1"/><path d="M13 1.5l5 5M18 1.5l-5 5" stroke="#222" stroke-width="1.2"/></svg><div class="t" style="left:942.5px;top:107.9px;transform:translate(0,-50%);font-size:12.5px;font-weight:bold;color:#111">Maytec (USA)</div><div class="t" style="left:944px;top:119.8px;transform:translate(0,-50%);"><svg class="cj" width="47.20" height="7.5" viewBox="0 0 47.20 7.5" style="margin-right:0.80px;color:#000;opacity:0.92;overflow:visible;stroke-width:1.6"><use href="#g4" x="0.00" y="0" width="7.20" height="7.5"/><use href="#g1" x="8.00" y="0" width="7.20" height="7.5"/><use href="#g8" x="16.00" y="0" width="7.20" height="7.5"/><use href="#g5" x="24.00" y="0" width="7.20" height="7.5"/><use href="#g2" x="32.00" y="0" width="7.20" height="7.5"/><use href="#g9" x="40.00" y="0" width="7.20" height="7.5"/></svg></div><div class="t" style="left:1120px;top:119.8px;transform:translate(-100%,-50%);font-size:8px;font-weight:bold;color:#111">10 kg</div><div class="t" style="left:944px;top:131.8px;transform:translate(0,-50%);"><svg class="cj" width="31.20" height="7.5" viewBox="0 0 31.20 7.5" style="margin-right:0.80px;color:#000;opacity:0.92;overflow:visible;stroke-width:1.6"><use href="#g6" x="0.00" y="0" width="7.20" height="7.5"/><use href="#g3" x="8.00" y="0" width="7.20" height="7.5"/><use href="#g0" x="16.00" y="0" width="7.20" height="7.5"/><use href="#g7" x="24.00" y="0" width="7.20" height="7.5"/></svg></div><div class="t" style="left:944px;top:144.6px;transform:translate(0,-50%);"><svg class="cj" width="47.20" height="7.5" viewBox="0 0 47.20 7.5" style="margin-right:0.80px;color:#000;opacity:0.92;overflow:visible;stroke-width:1.6"><use href="#g4" x="0.00" y="0" width="7.20" height="7.5"/><use href="#g1" x="8.00" y="0" width="7.20" height="7.5"/><use href="#g8" x="16.00" y="0" width="7.20" height="7.5"/><use href="#g5" x="24.00" y="0" width="7.20" height="7.5"/><use href="#g2" x="32.00" y="0" width="7.20" height="7.5"/><use href="#g9" x="40.00" y="0" width="7.20" height="7.5"/></svg><span style="font-size:8px;font-weight:bold;color:#111">...</span></div><div class="a" style="left:939px;top:154.5px;width:185px;height:12px;background:#fff;border:1px solid #dcdcdc;border-radius:2px"></div><div class="t" style="left:1031px;top:160.6px;transform:translate(-50%,-50%);"><svg class="cj" width="39.20" height="7.5" viewBox="0 0 39.20 7.5" style="margin-right:0.80px;color:#000;opacity:0.92;overflow:visible;stroke-width:1.6"><use href="#g6" x="0.00" y="0" width="7.20" height="7.5"/><use href="#g3" x="8.00" y="0" width="7.20" height="7.5"/><use href="#g0" x="16.00" y="0" width="7.20" height="7.5"/><use href="#g7" x="24.00" y="0" width="7.20" height="7.5"/><use href="#g4" x="32.00" y="0" width="7.20" height="7.5"/></svg></div><div class="a" style="left:937px;top:174px;width:188px;height:11px;background:#d8d8d8"></div><div class="t" style="left:938.5px;top:179.5px;transform:translate(0,-50%);"><svg class="cj" width="14.60" height="7" viewBox="0 0 14.60 7" style="margin-right:0.60px;color:#000;opacity:0.5;overflow:visible;stroke-width:1.6"><use href="#g1" x="0.00" y="0" width="7.00" height="7"/><use href="#g8" x="7.60" y="0" width="7.00" height="7"/></svg></div><svg class="a" style="left:1105px;top:175.5px" width="20" height="9" viewBox="0 0 20 9"><path d="M2 3h4.5v4.5h-4.5zM3.5 3v-1.5h4.5v4.5h-1.5" fill="none" stroke="#222" stroke-width="1"/><path d="M13 1.5l5 5M18 1.5l-5 5" stroke="#222" stroke-width="1.2"/></svg><div class="t" style="left:968.2px;top:191.3px;transform:translate(-50%,-50%);"><svg class="cj" width="22.00" height="6.5" viewBox="0 0 22.00 6.5" style="margin-right:0.80px;color:#000;opacity:0.7;overflow:visible;stroke-width:1.6"><use href="#g5" x="0.00" y="0" width="6.80" height="6.5"/><use href="#g2" x="7.60" y="0" width="6.80" height="6.5"/><use href="#g9" x="15.20" y="0" width="6.80" height="6.5"/></svg></div><div class="t" style="left:968.2px;top:199.3px;transform:translate(-50%,-50%);font-size:7px;font-weight:bold;color:#222">6</div><div class="t" style="left:1030.8px;top:191.3px;transform:translate(-50%,-50%);"><svg class="cj" width="22.00" height="6.5" viewBox="0 0 22.00 6.5" style="margin-right:0.80px;color:#000;opacity:0.7;overflow:visible;stroke-width:1.6"><use href="#g6" x="0.00" y="0" width="6.80" height="6.5"/><use href="#g3" x="7.60" y="0" width="6.80" height="6.5"/><use href="#g0" x="15.20" y="0" width="6.80" height="6.5"/></svg></div><div class="t" style="left:1030.8px;top:199.3px;transform:translate(-50%,-50%);font-size:7px;font-weight:bold;color:#222">8</div><div class="t" style="left:1093.5px;top:191.3px;transform:translate(-50%,-50%);"><svg class="cj" width="14.40" height="6.5" viewBox="0 0 14.40 6.5" style="margin-right:0.80px;color:#000;opacity:0.7;overflow:visible;stroke-width:1.6"><use href="#g7" x="0.00" y="0" width="6.80" height="6.5"/><use href="#g4" x="7.60" y="0" width="6.80" height="6.5"/></svg></div><div class="t" style="left:1093.5px;top:199.3px;transform:translate(-50%,-50%);font-size:7px;font-weight:bold;color:#222">0</div><div class="a" style="left:937.5px;top:205.3px;width:7.2px;height:7.5px;background:#f8f8f8;border:1px solid #7a7a7a;border-radius:1.5px"></div><div class="t" style="left:948px;top:209.3px;transform:translate(0,-50%);"><svg class="cj" width="42.60" height="7" viewBox="0 0 42.60 7" style="margin-right:0.60px;color:#000;opacity:0.65;overflow:visible;stroke-width:1.6"><use href="#g1" x="0.00" y="0" width="6.60" height="7"/><use href="#g8" x="7.20" y="0" width="6.60" height="7"/><use href="#g5" x="14.40" y="0" width="6.60" height="7"/><use href="#g2" x="21.60" y="0" width="6.60" height="7"/><use href="#g9" x="28.80" y="0" width="6.60" height="7"/><use href="#g6" x="36.00" y="0" width="6.60" height="7"/></svg></div><div class="a" style="left:937.5px;top:216.2px;width:7.2px;height:7.5px;background:#f8f8f8;border:1px solid #7a7a7a;border-radius:1.5px"></div><div class="t" style="left:948px;top:220.2px;transform:translate(0,-50%);"><svg class="cj" width="35.40" height="7" viewBox="0 0 35.40 7" style="margin-right:0.60px;color:#000;opacity:0.65;overflow:visible;stroke-width:1.6"><use href="#g3" x="0.00" y="0" width="6.60" height="7"/><use href="#g0" x="7.20" y="0" width="6.60" height="7"/><use href="#g7" x="14.40" y="0" width="6.60" height="7"/><use href="#g4" x="21.60" y="0" width="6.60" height="7"/><use href="#g1" x="28.80" y="0" width="6.60" height="7"/></svg></div><div class="t" style="left:1042px;top:662.5px;transform:translate(0,-50%);"><svg class="cj" width="73.20" height="6" viewBox="0 0 73.20 6" style="margin-right:0.60px;color:#fff;opacity:0.75;overflow:visible;stroke-width:1.6"><use href="#g8" x="0.00" y="0" width="7.60" height="6"/><use href="#g5" x="8.20" y="0" width="7.60" height="6"/><use href="#g2" x="16.40" y="0" width="7.60" height="6"/><use href="#g9" x="24.60" y="0" width="7.60" height="6"/><use href="#g6" x="32.80" y="0" width="7.60" height="6"/><use href="#g3" x="41.00" y="0" width="7.60" height="6"/><use href="#g0" x="49.20" y="0" width="7.60" height="6"/><use href="#g7" x="57.40" y="0" width="7.60" height="6"/><use href="#g4" x="65.60" y="0" width="7.60" height="6"/></svg></div>
</body></html>
